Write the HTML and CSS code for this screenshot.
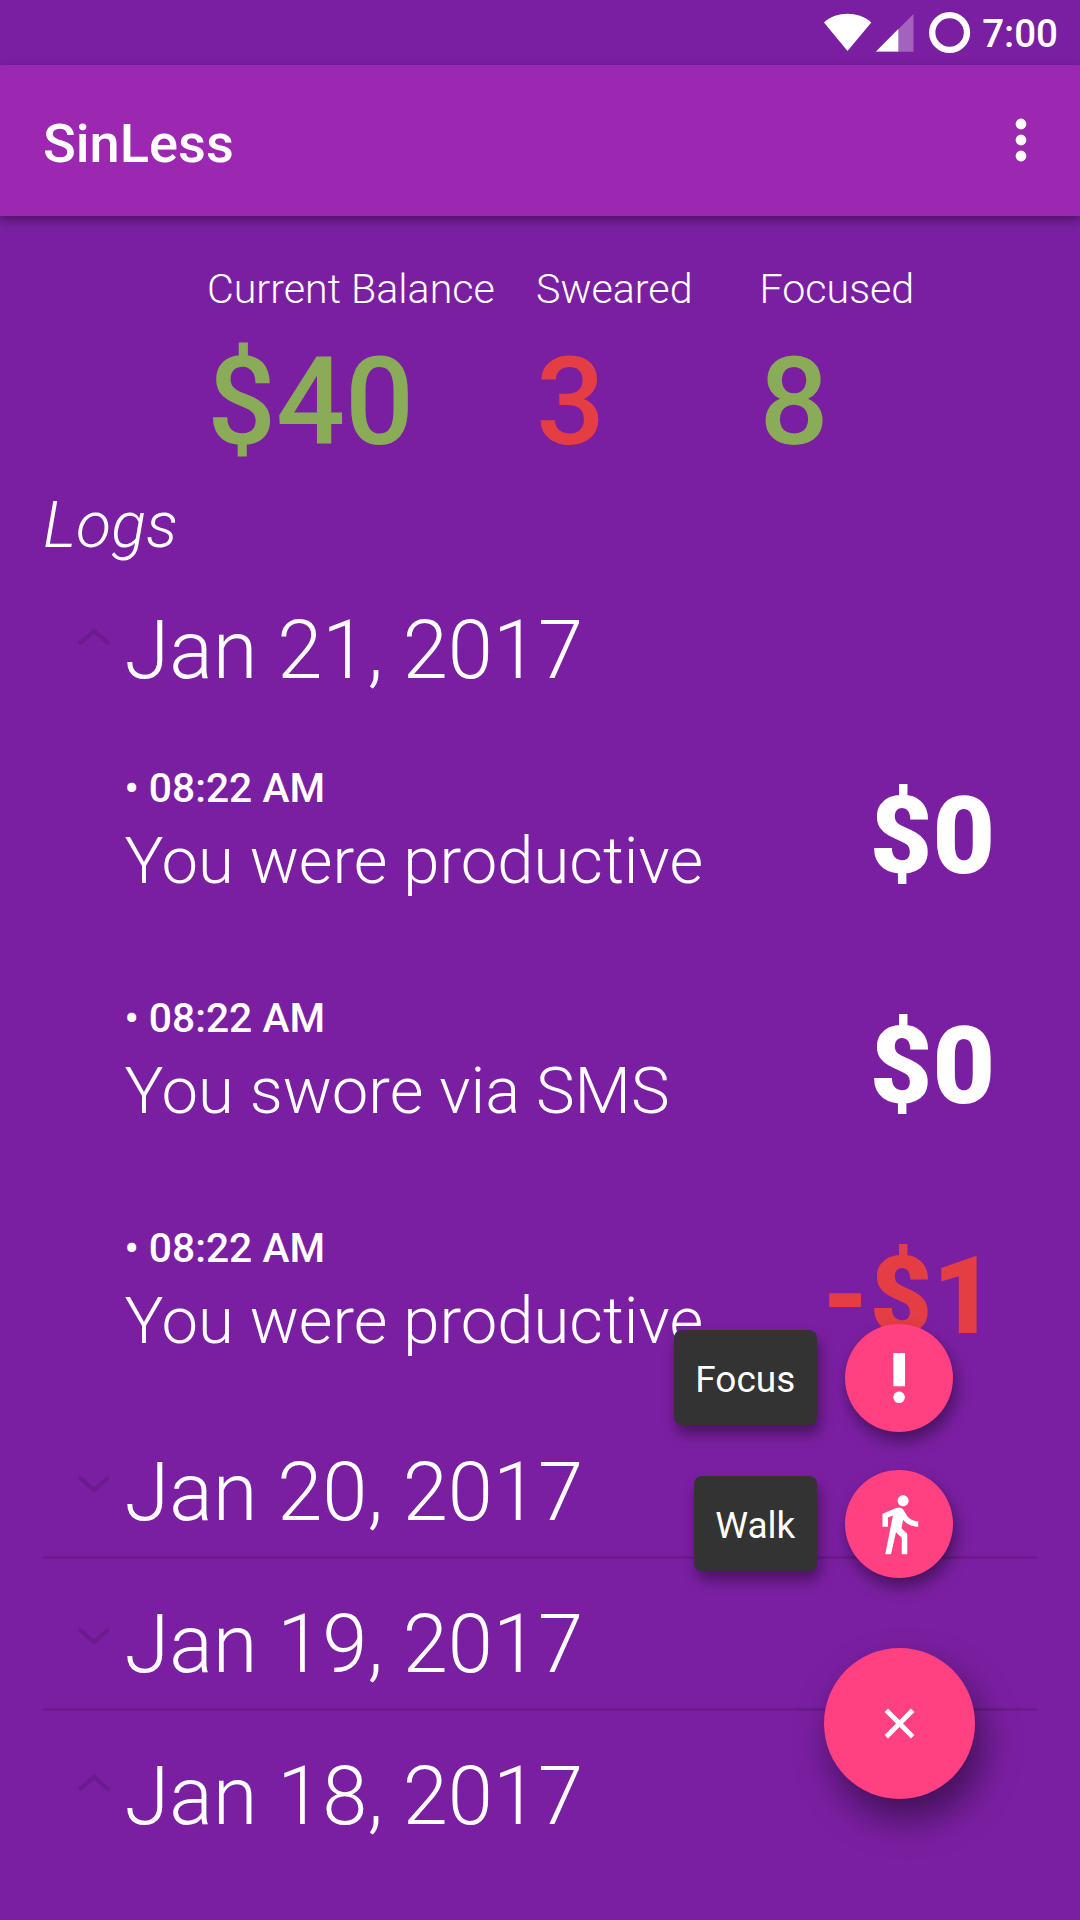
FILE: index.html
```html
<!DOCTYPE html>
<html lang="en">
<head>
<meta charset="utf-8">
<title>SinLess</title>
<link rel="stylesheet" href="styles.css">
</head>
<body>
<div class="screen">
  <div class="status-bar">
    <svg class="status-icons" viewBox="0 0 148 65" width="148" height="65">
      <path class="solid" d="M0 22.5C6.500 16.500 15 13.800 23.500 13.800S40.500 16.500 47.300 22.500L23.500 51Z"/>
      <path class="dim" d="M52 51.700L89.500 14V51.700Z"/>
      <path class="solid" d="M52 51.500L74.300 29V51.500Z"/>
      <circle class="ring" cx="125.600" cy="32.500" r="17.400"/>
    </svg>
    <span class="clock">7:00</span>
  </div>

  <header class="app-bar">
    <h1 class="title">SinLess</h1>
    <svg class="overflow" viewBox="0 0 12 44" width="12" height="44">
      <circle cx="6" cy="6" r="5.400"/><circle cx="6" cy="22" r="5.400"/><circle cx="6" cy="38" r="5.400"/>
    </svg>
  </header>

  <section class="stats">
    <div class="stat"><span class="stat-label">Current Balance</span><span class="stat-value good">$40</span></div>
    <div class="stat"><span class="stat-label">Sweared</span><span class="stat-value bad">3</span></div>
    <div class="stat"><span class="stat-label">Focused</span><span class="stat-value good">8</span></div>
  </section>

  <h2 class="logs-title">Logs</h2>

  <main class="logs">
    <div class="day open">
      <svg class="chevron" viewBox="0 0 34 18" width="34" height="18"><path d="M2 16L17 3L32 16"/></svg>
      <span class="date">Jan 21, 2017</span>
    </div>
    <div class="entry">
      <div class="detail"><span class="time">• 08:22 AM</span><span class="event">You were productive</span></div>
      <span class="amount">$0</span>
    </div>
    <div class="entry">
      <div class="detail"><span class="time">• 08:22 AM</span><span class="event">You swore via SMS</span></div>
      <span class="amount">$0</span>
    </div>
    <div class="entry">
      <div class="detail"><span class="time">• 08:22 AM</span><span class="event">You were productive</span></div>
      <span class="amount bad">-$1</span>
    </div>
    <div class="day ruled">
      <svg class="chevron" viewBox="0 0 34 18" width="34" height="18"><path d="M2 2L17 15L32 2"/></svg>
      <span class="date">Jan 20, 2017</span>
    </div>
    <div class="day ruled">
      <svg class="chevron" viewBox="0 0 34 18" width="34" height="18"><path d="M2 2L17 15L32 2"/></svg>
      <span class="date">Jan 19, 2017</span>
    </div>
    <div class="day open">
      <svg class="chevron" viewBox="0 0 34 18" width="34" height="18"><path d="M2 16L17 3L32 16"/></svg>
      <span class="date">Jan 18, 2017</span>
    </div>
  </main>

  <div class="fab-menu">
    <div class="action">
      <span class="action-label">Focus</span>
      <button class="fab mini" aria-label="Focus">
        <svg viewBox="0 0 108 108" width="108" height="108"><path d="M48.300 29H60V62.300H48.300Z"/><circle cx="54.100" cy="73.300" r="5.800"/></svg>
      </button>
    </div>
    <div class="action">
      <span class="action-label">Walk</span>
      <button class="fab mini" aria-label="Walk">
        <svg viewBox="0 0 24 24" width="66" height="66"><path d="M13.500 5.500c1.100 0 2-.9 2-2s-.9-2-2-2-2 .9-2 2 .9 2 2 2zM9.800 8.900L7 23h2.100l1.800-8 2.100 2v6h2v-7.500l-2.100-2 .6-3C14.800 12 16.800 13 19 13v-2c-1.900 0-3.500-1-4.300-2.400l-1-1.600c-.4-.6-1-1-1.700-1-.3 0-.5.1-.8.1L6 8.300V13h2V9.600l1.800-.7"/></svg>
      </button>
    </div>
    <button class="fab main" aria-label="Close">
      <svg class="close" viewBox="0 0 24 24" width="51" height="51"><path d="M5.800 5.800L18.200 18.200M18.200 5.800L5.800 18.200"/></svg>
    </button>
  </div>
</div>
</body>
</html>
```
FILE: styles.css
```css
* { box-sizing: border-box; }

body {
  margin: 0;
  background: #7b1fa2;
  color: #fff;
  font-family: Roboto, sans-serif;
}

.screen {
  position: relative;
  width: 1080px;
  height: 1920px;
  overflow: hidden;
}

.status-bar {
  display: flex;
  justify-content: flex-end;
  gap: 10px;
  height: 65px;
  padding-right: 22px;
}
.status-icons { flex: none; }
.status-icons .solid { fill: #fff; }
.status-icons .dim { fill: #fff; opacity: .3; }
.status-icons .ring { fill: none; stroke: #fff; stroke-width: 6.300px; }
.clock {
  font-size: 38.500px;
  font-weight: 500;
  line-height: 68px;
}

.app-bar {
  display: flex;
  align-items: center;
  justify-content: space-between;
  height: 151px;
  padding: 0 53px 0 43px;
  background: #9c27b0;
  box-shadow: 0 4px 10px rgba(0, 0, 0, .4);
}
.title {
  margin: 0;
  padding-top: 7px;
  font-size: 54.200px;
  font-weight: 500;
  line-height: 64px;
}
.overflow {
  margin-bottom: 1px;
  fill: #fff;
}

.stats {
  display: grid;
  grid-template-columns: 329px 223.500px auto;
  padding: 49px 0 0 207px;
}
.stat {
  display: flex;
  flex-direction: column;
  gap: 18px;
}
.stat-label {
  font-size: 41.200px;
  font-weight: 300;
  line-height: 48px;
}
.stat-value {
  font-size: 121.500px;
  font-weight: 500;
  line-height: 144px;
}
.good { color: #8aab57; }
.bad { color: #e43e44; }

.logs-title {
  margin: 12px 0 2px 43px;
  font-size: 64.600px;
  font-style: italic;
  font-weight: 300;
  line-height: 76px;
}

.logs { margin: 0 43px; }

.day {
  display: flex;
  align-items: flex-start;
  gap: 14px;
  height: 152px;
  padding: 38px 0 0 33.500px;
}
.day.ruled { border-bottom: 3px solid rgba(0, 0, 0, .13); }
.chevron {
  flex: none;
  margin-top: 30px;
  fill: none;
  stroke: rgba(0, 0, 0, .13);
  stroke-width: 4.200px;
}
.open .chevron { margin-top: 25px; }
.date {
  font-size: 81.250px;
  font-weight: 300;
  line-height: 96px;
}

.entry {
  display: flex;
  align-items: flex-start;
  justify-content: space-between;
  height: 230px;
  padding: 47px 42px 0 81.500px;
}
.detail {
  display: flex;
  flex-direction: column;
  gap: 11px;
}
.time {
  font-size: 40.750px;
  font-weight: 500;
  line-height: 48px;
}
.event {
  font-size: 65.150px;
  font-weight: 300;
  line-height: 76px;
}
.amount {
  padding-top: 8px;
  font-size: 108px;
  font-weight: 900;
  line-height: 128px;
}

/* Speed-dial floats above the log list */
.fab-menu {
  position: absolute;
  top: 1324px;
  right: 105px;
  display: flex;
  flex-direction: column;
  align-items: flex-end;
  gap: 38px;
}
.action {
  display: flex;
  align-items: center;
  gap: 28px;
  padding-right: 22px;
}
.action-label {
  height: 95px;
  margin-bottom: 1px;
  padding: 4px 21.700px 0;
  border-radius: 8px;
  background: #333;
  box-shadow: 3px 9px 14px rgba(0, 0, 0, .4);
  font-size: 37px;
  line-height: 92px;
}
.fab {
  display: flex;
  align-items: center;
  justify-content: center;
  padding: 0;
  border: 0;
  border-radius: 50%;
  background: #ff4081;
}
.fab svg { flex: none; fill: #fff; }
.fab .close { stroke: #fff; stroke-width: 2.300px; }
.fab.mini {
  width: 108px;
  height: 108px;
  box-shadow: 3px 9px 16px rgba(0, 0, 0, .42);
}
.fab.main {
  width: 151px;
  height: 151px;
  margin-top: 32px;
  box-shadow: 8px 20px 38px rgba(0, 0, 0, .48);
}
```
